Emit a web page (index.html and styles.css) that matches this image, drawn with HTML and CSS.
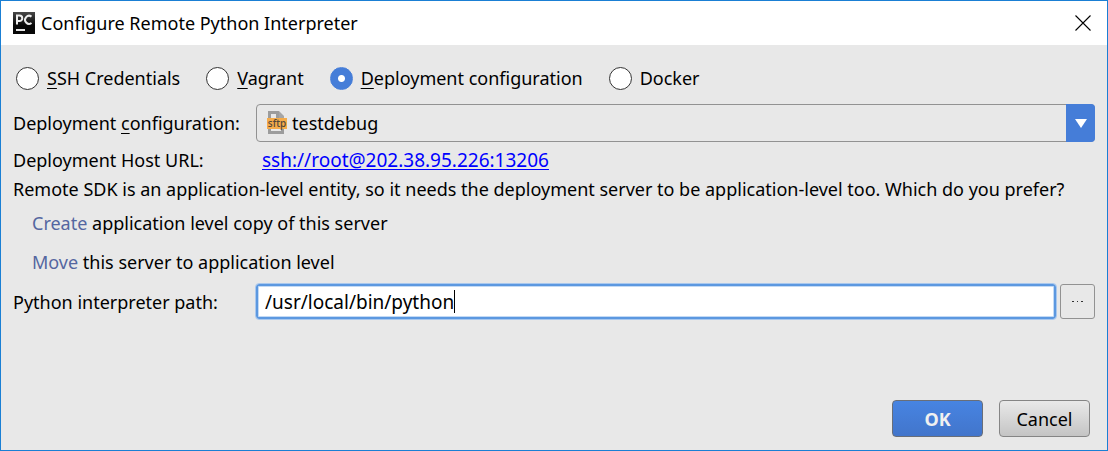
FILE: index.html
```html
<!DOCTYPE html>
<html lang="en">
<head>
<meta charset="utf-8">
<title>Configure Remote Python Interpreter</title>
<link rel="stylesheet" href="styles.css">
</head>
<body>
<main class="dialog">
  <header class="titlebar">
    <svg class="app-icon" viewBox="0 0 22 22" aria-hidden="true">
      <defs><linearGradient id="shade" x1="0" y1="0" x2="0" y2="1"><stop offset="0" stop-color="#484848"/><stop offset=".6" stop-color="#080808"/></linearGradient></defs>
      <rect width="22" height="22" fill="url(#shade)"/>
      <path d="M4 12.500V3.500h2.500a2.500 2.500 0 0 1 0 5.500H4M18.500 4.600a4 4 0 1 0 0 6.400" fill="none" stroke="#eee" stroke-width="2"/>
      <path d="M3 18h9" stroke="#fff" stroke-width="1.800"/>
    </svg>
    <h1 class="title">Configure Remote Python Interpreter</h1>
    <button class="close" type="button" aria-label="Close">
      <svg viewBox="0 0 16 16" width="16" height="16" aria-hidden="true"><path d="M.5.5l15 15M15.500.5l-15 15" stroke="#000" stroke-width="1.100"/></svg>
    </button>
  </header>
  <form class="content">
    <div class="modes">
      <label class="mode"><input class="radio" type="radio" name="mode"><span><u>S</u>SH Credentials</span></label>
      <label class="mode"><input class="radio" type="radio" name="mode"><span><u>V</u>agrant</span></label>
      <label class="mode"><input class="radio" type="radio" name="mode" checked><span><u>D</u>eployment configuration</span></label>
      <label class="mode"><input class="radio" type="radio" name="mode"><span>Docker</span></label>
    </div>
    <div class="row">
      <label for="config">Deployment <u>c</u>onfiguration:</label>
      <div class="combo">
        <select class="select" id="config"><option>testdebug</option></select>
        <svg class="sftp" viewBox="0 0 20 23" aria-hidden="true">
          <path d="M1 7V0h11v3H4v4zM1 18h3v2h10v-2h3v5H1zM9 3h3v4H9z" fill="#9c9c9c"/>
          <path d="M12 0l5 5v2h-5z" fill="#a6a6a6"/>
          <rect y="7" width="20" height="11" fill="#f4ab4a"/>
          <text class="sftp-text" x="10" y="16" text-anchor="middle">sftp</text>
        </svg>
        <span class="arrow"><svg viewBox="0 0 12 9" width="12" height="9" aria-hidden="true"><path d="M0 0h12L6 9z" fill="#fff"/></svg></span>
      </div>
    </div>
    <div class="row host">
      <span>Deployment Host URL:</span>
      <a class="url" href="ssh://root@202.38.95.226:13206">ssh://root@202.38.95.226:13206</a>
    </div>
    <p class="message">Remote SDK is an application-level entity, so it needs the deployment server to be application-level too. Which do you prefer?</p>
    <p class="choice"><a class="action" href="#create">Create</a> application level copy of this server</p>
    <p class="choice"><a class="action" href="#move">Move</a> this server to application level</p>
    <div class="row">
      <label for="path">Python interpreter path:</label>
      <div class="path-field">
        <div class="path-box"><input class="path" id="path" type="text" value="/usr/local/bin/python"><span class="caret"></span></div>
        <button class="browse" type="button" aria-label="Browse"><svg viewBox="0 0 11 1" width="11" height="1" aria-hidden="true"><path d="M0 0h2v1H0zM5 0h1v1H5zM9 0h2v1H9z" fill="#333"/></svg></button>
      </div>
    </div>
    <footer class="buttons">
      <button class="button primary" type="submit">OK</button>
      <button class="button" type="button">Cancel</button>
    </footer>
  </form>
</main>
</body>
</html>
```
FILE: styles.css
```css
* { box-sizing: border-box; }
body {
  margin: 0;
  font-family: "Noto Sans", "Open Sans", sans-serif;
  font-size: 18px;
  line-height: 28px;
  color: #000;
}
button, input, select { font: inherit; color: inherit; margin: 0; }
p { margin: 0; }
u { text-underline-offset: 3px; text-decoration-thickness: 1px; }
.dialog {
  display: flex;
  flex-direction: column;
  min-height: 100vh;
  border: 1px solid #1a7fd4;
  background: #e8e8e8;
}
.titlebar {
  display: flex;
  align-items: center;
  gap: 6px;
  height: 44px;
  padding: 0 16px 0 12px;
  background: #fff;
}
.app-icon { width: 22px; height: 22px; }
.title { flex: 1; margin: 0; font-size: 18px; font-weight: 400; }
.close { display: flex; padding: 0; border: 0; background: none; }
.content {
  flex: 1;
  display: flex;
  flex-direction: column;
  padding: 16px 12px 13px;
}
.modes { display: flex; gap: 26px; height: 34px; margin-bottom: 9px; padding-left: 3px; }
.mode { display: flex; align-items: center; gap: 8px; white-space: nowrap; }
.radio {
  appearance: none;
  width: 23px;
  height: 23px;
  margin: 0;
  border: 1px solid #333;
  border-radius: 50%;
  background: #fff;
}
.radio:checked { border-color: #457dd8; background: radial-gradient(circle, #fff 3px, #457dd8 4px); }
.row { display: grid; grid-template-columns: 243px 1fr; align-items: center; white-space: nowrap; }
.combo { position: relative; display: flex; }
.select {
  appearance: none;
  width: 100%;
  height: 38px;
  padding: 0 35px;
  border: 1px solid #929292;
  border-radius: 4px;
  background: #e8e8e8;
}
.sftp { position: absolute; left: 11px; top: 7px; width: 20px; height: 23px; }
.sftp-text { font-size: 10px; font-weight: 500; fill: #51463a; }
.arrow {
  position: absolute;
  top: 0;
  right: 0;
  bottom: 0;
  display: flex;
  align-items: center;
  justify-content: center;
  width: 29px;
  border-radius: 0 4px 4px 0;
  background: #457dd8;
  pointer-events: none;
}
.host { margin-top: 4px; }
.url {
  padding-left: 6px;
  font-size: 19px;
  color: #00f;
  text-underline-offset: 2px;
  text-decoration-thickness: 1px;
  text-decoration-skip-ink: none;
}
.message { margin: 1px 0 6px; }
.choice { margin-bottom: 11px; padding-left: 19px; }
.choice + .choice { margin-bottom: 8px; }
.action { color: #5466a0; text-decoration: none; }
.path-field { display: flex; gap: 4px; }
.path-box { position: relative; flex: 1; }
.path {
  display: block;
  width: 100%;
  height: 35px;
  padding: 0 7px;
  border: 2px solid #5c98e0;
  border-radius: 3px;
  outline: 1px solid #a9c8ee;
  box-shadow: inset 0 0 0 1px #c3daf5;
  background: #fff;
  font-size: 19px;
}
.caret { position: absolute; left: 198px; top: 6px; width: 1px; height: 23px; background: #000; }
.browse {
  display: flex;
  align-items: center;
  justify-content: center;
  width: 35px;
  height: 35px;
  padding: 0;
  border: 1px solid #929292;
  border-radius: 3px;
  background: #e8e8e8;
}
.buttons { display: flex; justify-content: flex-end; gap: 16px; margin-top: auto; padding-right: 5px; }
.button {
  width: 91px;
  height: 37px;
  padding: 0;
  border: 1px solid #858585;
  border-radius: 4px;
  background: linear-gradient(#e9e9e9, #c4c4c4);
}
.primary { border-color: #696e78; background: linear-gradient(#4784e2, #4275cb); color: #f0f0f0; font-weight: 700; }
```
